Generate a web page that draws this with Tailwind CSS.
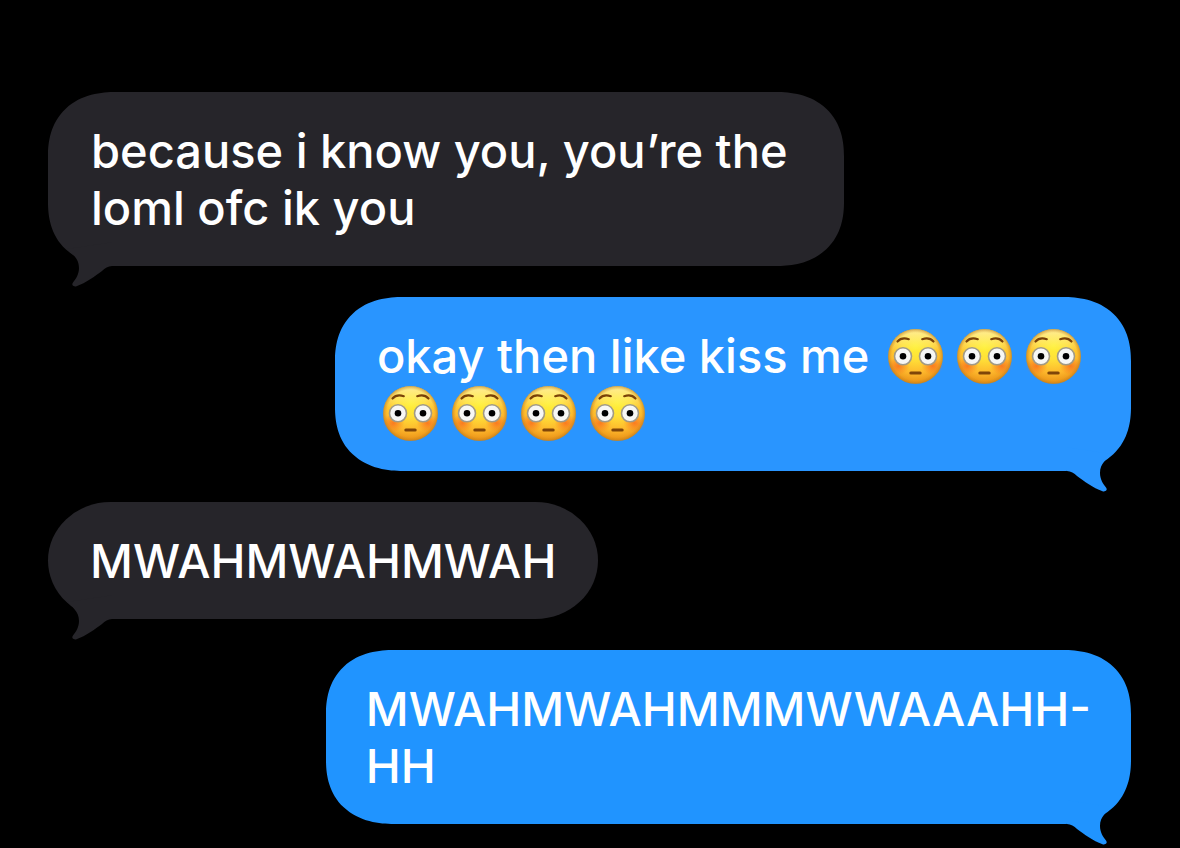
<!DOCTYPE html>
<html lang="en">

<head>
    <meta charset="UTF-8" />
    <meta name="viewport" content="width=device-width, initial-scale=1.0" />
    <title>Messages</title>
    <script src="https://cdn.jsdelivr.net/npm/@tailwindcss/browser@4"></script>
</head>

<body class="bg-black min-h-screen overflow-x-hidden font-['Inter',sans-serif] font-medium text-[47px] leading-[57px] text-white">
    <!-- SHARED SHAPES -->
    <svg class="absolute w-0 h-0" aria-hidden="true">
        <defs>
            <radialGradient id="face" cx="0.5" cy="0.3" r="0.72">
                <stop offset="0" stop-color="#fff235" />
                <stop offset="0.35" stop-color="#ffe038" />
                <stop offset="0.7" stop-color="#fdb72c" />
                <stop offset="1" stop-color="#e68a12" />
            </radialGradient>
            <linearGradient id="shine" x1="0" y1="0" x2="0" y2="1">
                <stop offset="0" stop-color="#fff0b0" stop-opacity="0.8" />
                <stop offset="0.4" stop-color="#fff0a0" stop-opacity="0" />
            </linearGradient>
            <radialGradient id="blush">
                <stop offset="0" stop-color="#f9651c" stop-opacity="0.75" />
                <stop offset="1" stop-color="#f9701c" stop-opacity="0" />
            </radialGradient>
            <radialGradient id="rim">
                <stop offset="0.86" stop-color="#c98a1c" stop-opacity="0" />
                <stop offset="1" stop-color="#b87a20" stop-opacity="0.6" />
            </radialGradient>
        </defs>
        <symbol id="flushed" viewBox="0 0 55 55">
            <circle cx="27.5" cy="27.5" r="27.3" fill="url(#face)" />
            <circle cx="27.5" cy="27.5" r="27.3" fill="url(#shine)" />
            <ellipse cx="10.5" cy="37" rx="11" ry="9" fill="url(#blush)" />
            <ellipse cx="44.5" cy="37" rx="11" ry="9" fill="url(#blush)" />
            <circle cx="27.5" cy="27.5" r="27.5" fill="url(#rim)" />
            <circle cx="15" cy="27.3" r="8.5" fill="#f7f7f5" stroke="#a19a86" stroke-width="1.6" />
            <circle cx="40" cy="27.3" r="8.5" fill="#f7f7f5" stroke="#a19a86" stroke-width="1.6" />
            <circle cx="15" cy="27.3" r="3.3" fill="#000" />
            <circle cx="40" cy="27.3" r="3.3" fill="#000" />
            <path d="M9.5 12.5C12 9.6 16.5 8.8 20.8 10.2M34.2 10.2C38.5 8.8 43 9.6 45.5 12.5" fill="none" stroke="#7a4208" stroke-width="2.2" stroke-linecap="round" />
            <rect x="21.3" y="42.4" width="12.4" height="3" rx="1.5" fill="#7f4509" />
        </symbol>
        <symbol id="tail" viewBox="0 0 64 62">
            <path d="M19 23C24 28 31 32 31 42C31 48 28 53 25 56.5C23.2 59 25 61 28.5 60.2C38 57 47 50 54 45Q59 40 66 40V16Z" />
        </symbol>
    </svg>

    <!-- CONVERSATION -->
    <main class="pl-12 pr-[49px] pt-[92px] pb-6">
        <ol class="flex flex-col gap-[31px]">
            <li class="relative self-start bg-[#26252a] rounded-[68px/64px] [corner-shape:superellipse(1.2)] pl-[43px] pr-[56px] py-[30px] whitespace-nowrap">
                <p>because i know you, you’re the<br>loml ofc ik you</p>
                <svg class="absolute left-0 -bottom-[22px] w-16 h-[62px] fill-[#26252a]" aria-hidden="true"><use href="#tail" /></svg>
            </li>

            <li class="relative self-end bg-[#2995ff] rounded-[68px/64px] [corner-shape:superellipse(1.2)] px-[42px] py-[30px] whitespace-nowrap">
                <p>okay then like kiss me <svg class="inline-block align-top w-[55px] h-[55px] mt-[2px] ml-[6px] mr-[8px]" role="img" aria-label="flushed face"><use href="#flushed" /></svg><svg class="inline-block align-top w-[55px] h-[55px] mt-[2px] ml-[6px] mr-[8px]" role="img" aria-label="flushed face"><use href="#flushed" /></svg><svg class="inline-block align-top w-[55px] h-[55px] mt-[2px] ml-[6px] mr-[8px]" role="img" aria-label="flushed face"><use href="#flushed" /></svg><br><svg class="inline-block align-top w-[55px] h-[55px] mt-[2px] ml-[6px] mr-[8px]" role="img" aria-label="flushed face"><use href="#flushed" /></svg><svg class="inline-block align-top w-[55px] h-[55px] mt-[2px] ml-[6px] mr-[8px]" role="img" aria-label="flushed face"><use href="#flushed" /></svg><svg class="inline-block align-top w-[55px] h-[55px] mt-[2px] ml-[6px] mr-[8px]" role="img" aria-label="flushed face"><use href="#flushed" /></svg><svg class="inline-block align-top w-[55px] h-[55px] mt-[2px] ml-[6px] mr-[8px]" role="img" aria-label="flushed face"><use href="#flushed" /></svg></p>
                <svg class="absolute right-0 -bottom-[22px] w-16 h-[62px] -scale-x-100 fill-[#2995ff]" aria-hidden="true"><use href="#tail" /></svg>
            </li>

            <li class="relative self-start bg-[#26252a] rounded-[64px/60px] px-[42px] py-[30px] whitespace-nowrap">
                <p>MWAHMWAHMWAH</p>
                <svg class="absolute left-0 -bottom-[22px] w-16 h-[62px] fill-[#26252a]" aria-hidden="true"><use href="#tail" /></svg>
            </li>

            <li class="relative self-end bg-[#2094ff] rounded-[68px/64px] [corner-shape:superellipse(1.2)] px-10 py-[30px] whitespace-nowrap">
                <p>MWAHMWAHMMMWWAAAHH-<br>HH</p>
                <svg class="absolute right-0 -bottom-[22px] w-16 h-[62px] -scale-x-100 fill-[#2094ff]" aria-hidden="true"><use href="#tail" /></svg>
            </li>
        </ol>
    </main>
</body>

</html>
